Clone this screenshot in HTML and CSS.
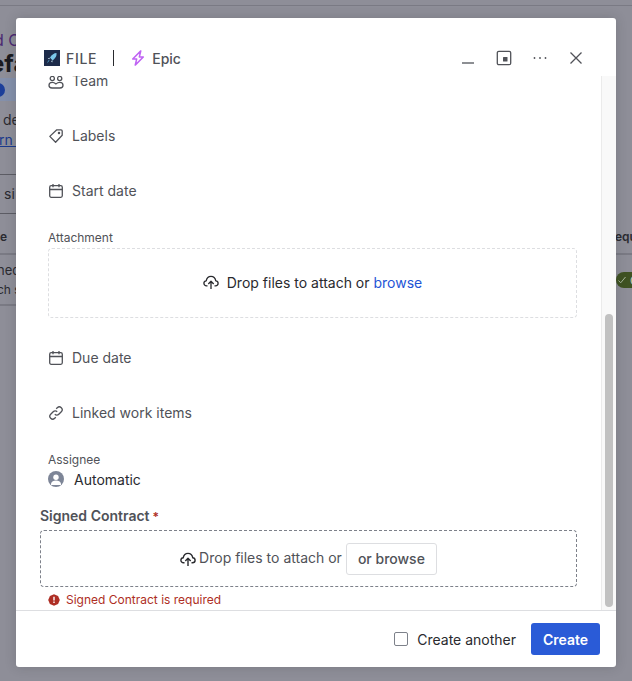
FILE: index.html
```html
<!DOCTYPE html>
<html lang="en">
<head>
    <meta charset="UTF-8">
    <meta name="viewport" content="width=device-width, initial-scale=1.0">
    <title>Create work item</title>
    <link rel="stylesheet" href="styles.css">
</head>
<body>
    <div class="page">
        <div class="page-top"></div>
        <div class="page-left">
            <p class="crumb">d C</p>
            <p class="heading">efa</p>
            <div class="banner"><span class="banner-dot"></span></div>
            <p class="copy">de</p>
            <p class="copy copy-link">rn m</p>
            <p class="search">si</p>
            <p class="col-head">e</p>
            <p class="cell-main">hed</p>
            <p class="cell-sub">ch s</p>
        </div>
        <div class="page-right">
            <p class="col-head">equ</p>
            <div class="status">
                <svg width="10" height="10" viewBox="0 0 10 10" fill="none" stroke="#a9b89c" stroke-width="1"><path d="M1.500 5.500l2.200 2.300L8.500 2"/></svg>
                <span>C</span>
            </div>
        </div>
    </div>

    <div class="modal">
        <div class="modal-header">
            <div class="crumbs">
                <svg class="project-icon" width="16" height="16" viewBox="0 0 16 16">
                    <rect width="16" height="16" fill="#1d2b4a"/>
                    <path d="M12.500 3c.4 2.600-.7 4.900-3.800 7.400L7 8.800l-1-1.300C8 4.500 10 3.200 12.500 3z" fill="#7cc8ea"/>
                    <path d="M5.800 7.700L3.700 8.300l1.700 1zM8.600 10.500l-.4 2.100-1.200-1.600z" fill="#cfeaf6"/>
                    <path d="M5.700 10.200l-2.500 3 .9-2.800z" fill="#4e9fca"/>
                </svg>
                <span class="crumb-label crumb-project">FILE</span>
                <span class="crumb-sep"></span>
                <svg width="16" height="16" viewBox="0 0 16 16" fill="none" stroke="#bf63f3" stroke-width="1.500" stroke-linejoin="round"><path d="M10.800.9L2.700 9h4l-1.500 6.100L13.300 7h-4z"/></svg>
                <span class="crumb-label">Epic</span>
            </div>
            <div class="actions">
                <svg width="16" height="16" viewBox="0 0 16 16" fill="none" stroke="#505258" stroke-width="1.300"><path d="M2 13h12"/></svg>
                <svg width="16" height="16" viewBox="0 0 16 16" fill="none"><rect x="1.300" y="1.300" width="13.400" height="13.400" rx="1.500" stroke="#505258" stroke-width="1.300"/><rect x="7" y="7" width="4.500" height="4.500" rx=".5" fill="#505258"/></svg>
                <svg width="16" height="16" viewBox="0 0 16 16" fill="#505258"><circle cx="2.500" cy="8" r=".9"/><circle cx="8" cy="8" r=".9"/><circle cx="13.500" cy="8" r=".9"/></svg>
                <svg width="16" height="16" viewBox="0 0 16 16" fill="none" stroke="#505258" stroke-width="1.300"><path d="M2.500 2.500l11 11M13.500 2.500l-11 11"/></svg>
            </div>
        </div>

        <div class="modal-body">
            <div class="form">
                <div class="field-row">
                    <svg width="16" height="16" viewBox="0 0 16 16" fill="none" stroke="#505258" stroke-width="1.300"><circle cx="4.300" cy="5.500" r="2.100"/><circle cx="11.700" cy="5.500" r="2.100"/><path d="M1 12.300c0-1.800 1.300-3 3.100-3 1.500 0 2.900.7 3.900 1.600.9-.9 2.400-1.600 3.900-1.600 1.800 0 3.100 1.200 3.100 3s-1.300 2.700-3 2.700H4c-1.700 0-3-.9-3-2.700z"/></svg>
                    <span>Team</span>
                </div>
                <div class="field-row">
                    <svg width="16" height="16" viewBox="0 0 16 16" fill="none" stroke="#505258" stroke-width="1.300" stroke-linejoin="round"><path d="M8.800 1.800h4.200c.7 0 1.200.5 1.200 1.200v4.200L7.600 14.200 1.800 8.400z"/><circle cx="11" cy="5" r=".6"/></svg>
                    <span>Labels</span>
                </div>
                <div class="field-row">
                    <svg width="16" height="16" viewBox="0 0 16 16" fill="none" stroke="#505258" stroke-width="1.300"><rect x="1.700" y="2.700" width="12.600" height="11.600" rx="1.500"/><path d="M1.700 6.500h12.600M5 1v3.200M11 1v3.200"/></svg>
                    <span>Start date</span>
                </div>

                <div class="attachment">
                    <label class="small-label">Attachment</label>
                    <div class="dropzone">
                        <svg width="16" height="16" viewBox="0 0 16 16" fill="none" stroke="#292a2e" stroke-width="1.300" stroke-linejoin="round"><path d="M4.500 11.800H3.600C2 11.800.9 10.700.9 9.300c0-1.300 1-2.400 2.300-2.500C3.700 4.300 5.600 2.400 8 2.400s4.300 1.900 4.800 4.400c1.300.1 2.300 1.200 2.300 2.500 0 1.400-1.100 2.500-2.700 2.500h-.9"/><path d="M8 15V7.500M5.300 10L8 7.300l2.700 2.700"/></svg>
                        <span>Drop files to attach or <a class="browse-link">browse</a></span>
                    </div>
                </div>

                <div class="field-row">
                    <svg width="16" height="16" viewBox="0 0 16 16" fill="none" stroke="#505258" stroke-width="1.300"><rect x="1.700" y="2.700" width="12.600" height="11.600" rx="1.500"/><path d="M1.700 6.500h12.600M5 1v3.200M11 1v3.200"/></svg>
                    <span>Due date</span>
                </div>
                <div class="field-row">
                    <svg width="16" height="16" viewBox="0 0 16 16" fill="none" stroke="#505258" stroke-width="1.300"><path d="M6.800 9.200a2.800 2.800 0 0 0 4 0l2.500-2.500a2.800 2.800 0 0 0-4-4L8.200 3.800"/><path d="M9.200 6.800a2.800 2.800 0 0 0-4 0L2.700 9.300a2.800 2.800 0 0 0 4 4l1.100-1.100"/></svg>
                    <span>Linked work items</span>
                </div>

                <div class="assignee">
                    <label class="small-label">Assignee</label>
                    <div class="assignee-value">
                        <svg width="16" height="16" viewBox="0 0 16 16"><circle cx="8" cy="8" r="8" fill="#7d8597"/><circle cx="8" cy="6.200" r="2.700" fill="#fff"/><path d="M3 12.500c.6-2 2.400-3 5-3s4.400 1 5 3V14H3z" fill="#fff"/></svg>
                        <span>Automatic</span>
                    </div>
                </div>

                <div class="contract">
                    <label class="contract-label">Signed Contract<span class="required">*</span></label>
                    <div class="dropzone dropzone-strong">
                        <svg width="16" height="16" viewBox="0 0 16 16" fill="none" stroke="#292a2e" stroke-width="1.400" stroke-linejoin="round"><path d="M4.500 11.800H3.600C2 11.800.9 10.700.9 9.300c0-1.300 1-2.400 2.300-2.500C3.700 4.300 5.600 2.400 8 2.400s4.300 1.900 4.800 4.400c1.300.1 2.300 1.200 2.300 2.500 0 1.400-1.100 2.500-2.700 2.500h-.9"/><path d="M8 15V7.500M5.300 10L8 7.300l2.700 2.700"/></svg>
                        <span class="drop-text">Drop files to attach or</span>
                        <button class="browse-btn">or browse</button>
                    </div>
                    <div class="error">
                        <svg width="12" height="12" viewBox="0 0 12 12"><path d="M6 .2l4.100 1.700L11.800 6l-1.700 4.100L6 11.800l-4.100-1.700L.2 6l1.700-4.100z" fill="#ae2e24"/><path d="M5.300 2.800h1.400v3.800H5.300zM5.300 7.500h1.400v1.400H5.300z" fill="#fff"/></svg>
                        <span>Signed Contract is required</span>
                    </div>
                </div>
            </div>
            <div class="scrollbar"><div class="scroll-thumb"></div></div>
        </div>

        <div class="modal-footer">
            <label class="create-another"><span class="checkbox"></span>Create another</label>
            <button class="create-btn">Create</button>
        </div>
    </div>
</body>
</html>
```

FILE: styles.css
```css
* {
    box-sizing: border-box;
    margin: 0;
    padding: 0;
}
body {
    font-family: 'Inter', 'Liberation Sans', sans-serif;
    width: 632px;
    height: 681px;
    overflow: hidden;
    background-color: #8e8e98;
    color: #292a2e;
    font-size: 14px;
}
.page {
    display: flex;
    justify-content: space-between;
    height: 100%;
}
.page-top {
    position: absolute;
    top: 5px;
    left: 0;
    right: 0;
    height: 1px;
    background-color: #7a7a84;
}
.page-left {
    width: 16px;
    overflow: hidden;
    white-space: nowrap;
    color: #2a2a30;
}
.crumb {
    margin-top: 32px;
    height: 17px;
    line-height: 17px;
    font-size: 16px;
    text-indent: -6px;
    color: #4b2a72;
}
.heading {
    height: 29px;
    line-height: 29px;
    font-size: 24px;
    font-weight: 700;
    text-indent: -10px;
    color: #1a1a20;
}
.banner {
    width: 16px;
    height: 23px;
    overflow: hidden;
    background-color: #8490ab;
}
.banner-dot {
    display: block;
    width: 14px;
    height: 14px;
    margin: 5px 0 0 -9px;
    border-radius: 50%;
    background-color: #1c3f9a;
}
.copy {
    height: 20px;
    line-height: 20px;
    margin-top: 9px;
    text-indent: 3px;
}
.copy-link {
    margin-top: 0;
    text-indent: -1px;
    color: #1b3a8c;
    text-decoration: underline;
}
.search {
    height: 40px;
    margin-top: 24px;
    line-height: 38px;
    text-indent: 4px;
    border-top: 1px solid #5c5c64;
    border-bottom: 1px solid #5c5c64;
}
.col-head {
    height: 41px;
    line-height: 46px;
    font-size: 12px;
    font-weight: 600;
    border-bottom: 2px solid #7a7a84;
}
.page-right .col-head {
    text-indent: -1px;
}
.cell-main {
    height: 22px;
    line-height: 30px;
    font-size: 13px;
    text-indent: -3px;
}
.cell-sub {
    height: 29px;
    line-height: 26px;
    font-size: 12px;
    text-indent: -3px;
    border-bottom: 2px solid #7a7a84;
}
.page-right {
    width: 16px;
    padding-top: 214px;
    overflow: hidden;
    white-space: nowrap;
    color: #2a2a30;
}
.status {
    display: flex;
    align-items: center;
    gap: 3px;
    width: 16px;
    height: 16px;
    margin-top: 17px;
    padding-left: 1px;
    overflow: hidden;
    font-size: 12px;
    color: #c6ceb9;
    border-radius: 8px 0 0 8px;
    background-color: #3f5222;
}
.status svg {
    flex-shrink: 0;
}
.modal {
    position: absolute;
    top: 18px;
    left: 16px;
    width: 600px;
    height: 649px;
    display: flex;
    flex-direction: column;
    background-color: #fff;
    border-radius: 3px;
    box-shadow: 0 0 12px rgba(30, 31, 33, 0.18);
}
.modal-header {
    height: 58px;
    flex-shrink: 0;
    display: flex;
    align-items: flex-start;
    justify-content: space-between;
    padding: 32px 32px 0 28px;
}
.crumbs {
    display: flex;
    align-items: center;
    gap: 6px;
    height: 16px;
}
.crumb-label {
    font-weight: 500;
    color: #505258;
}
.crumb-project {
    letter-spacing: 0.7px;
}
.crumb-sep {
    width: 1px;
    height: 16px;
    margin: 0 10px;
    background-color: #292a2e;
}
.actions {
    display: flex;
    gap: 20px;
}
.modal-body {
    flex: 1;
    min-height: 0;
    display: flex;
    overflow: hidden;
}
.form {
    flex: 1;
    margin-top: -23px;
    padding-left: 32px;
    padding-right: 24px;
}
.field-row {
    height: 55px;
    display: flex;
    align-items: center;
    gap: 8px;
    color: #505258;
}
.attachment {
    padding-top: 12px;
    padding-bottom: 12px;
}
.small-label {
    display: block;
    font-size: 12px;
    line-height: 16px;
    color: #505258;
}
.dropzone {
    height: 70px;
    margin-top: 2px;
    padding-bottom: 2px;
    display: flex;
    align-items: center;
    justify-content: center;
    gap: 8px;
    border: 1px dashed #dddee1;
    border-radius: 4px;
}
.browse-link {
    color: #1f55d6;
}
.assignee {
    height: 46px;
    margin-top: 12px;
}
.assignee-value {
    display: flex;
    align-items: center;
    gap: 10px;
    margin-top: 1px;
    height: 20px;
}
.contract {
    margin-left: -8px;
    margin-top: 9px;
}
.contract-label {
    display: block;
    height: 18px;
    line-height: 18px;
    font-weight: 600;
    color: #505258;
}
.required {
    margin-left: 3px;
    font-size: 12px;
    color: #ae2e24;
}
.dropzone-strong {
    height: 57px;
    margin-top: 5px;
    padding-bottom: 0;
    gap: 3px;
    border-color: #7d818a;
}
.drop-text {
    margin-bottom: 2px;
    color: #505258;
}
.browse-btn {
    width: 91px;
    height: 32px;
    margin-left: 1px;
    font-family: inherit;
    font-size: 14px;
    font-weight: 500;
    color: #505258;
    background-color: #fff;
    border: 1px solid #dddee1;
    border-radius: 3px;
}
.error {
    display: flex;
    align-items: center;
    gap: 6px;
    margin-top: 5px;
    margin-left: 8px;
    font-size: 12px;
    line-height: 16px;
    color: #ae2e24;
}
.scrollbar {
    width: 15px;
    flex-shrink: 0;
    position: relative;
    background-color: #f9f9f9;
    border-left: 1px solid #ebebeb;
}
.scroll-thumb {
    position: absolute;
    top: 238px;
    left: 3px;
    width: 8px;
    height: 293px;
    border-radius: 4px;
    background-color: #c1c1c1;
}
.modal-footer {
    height: 57px;
    flex-shrink: 0;
    display: flex;
    align-items: center;
    justify-content: flex-end;
    gap: 15px;
    padding-right: 16px;
    border-top: 1px solid #dddee1;
}
.create-another {
    display: flex;
    align-items: center;
    gap: 9px;
    color: #292a2e;
}
.checkbox {
    width: 14px;
    height: 14px;
    border: 1px solid #7d818a;
    border-radius: 2px;
}
.create-btn {
    width: 69px;
    height: 32px;
    font-family: inherit;
    font-size: 14px;
    font-weight: 600;
    color: #fff;
    background-color: #2a5bd7;
    border: none;
    border-radius: 3px;
}
```
